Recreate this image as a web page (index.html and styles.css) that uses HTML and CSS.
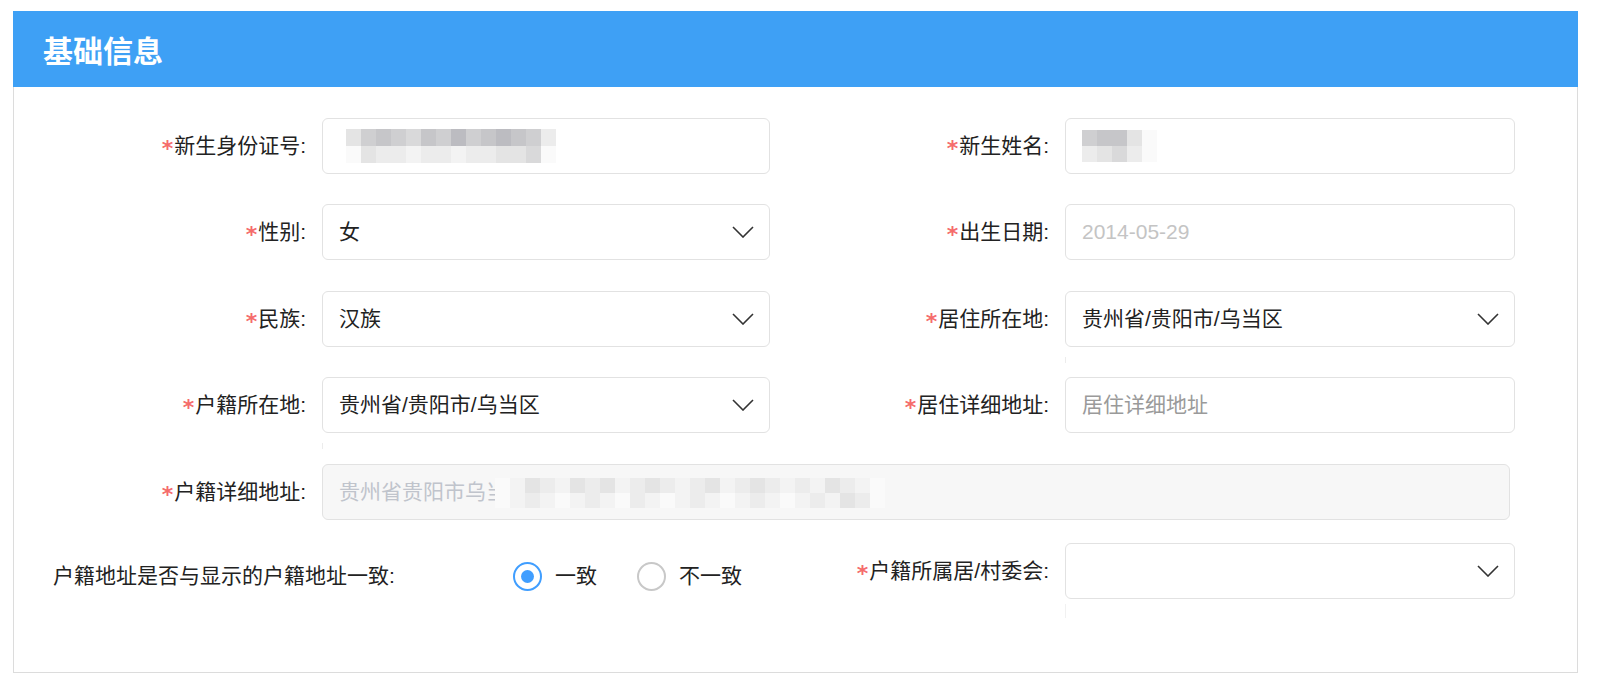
FILE: index.html
```html
<!DOCTYPE html>
<html lang="zh-CN">
<head>
<meta charset="utf-8">
<title>基础信息</title>
<link rel="stylesheet" href="styles.css">
</head>
<body>
<div class="panel">
  <div class="panel-head"><h2 class="panel-title">基础信息</h2></div>
  <div class="panel-body">
    <div class="row">
      <label class="label req">新生身份证号:</label>
      <div class="field">
        <div class="mz mz-id">
          <i class="e"></i><i class="c"></i><i class="b"></i><i class="c"></i><i class="d"></i><i class="b"></i><i class="c"></i><i class="a"></i><i class="c"></i><i class="b"></i><i class="a"></i><i class="b"></i><i class="c"></i><i class="f"></i>
          <i class="h"></i><i class="e"></i><i class="f"></i><i class="f"></i><i class="g"></i><i class="f"></i><i class="f"></i><i class="g"></i><i class="f"></i><i class="f"></i><i class="e"></i><i class="e"></i><i class="d"></i><i class="h"></i>
        </div>
      </div>
      <label class="label req">新生姓名:</label>
      <div class="field">
        <div class="mz mz-name">
          <i class="c"></i><i class="b"></i><i class="b"></i><i class="e"></i><i class="h"></i>
          <i class="f"></i><i class="e"></i><i class="d"></i><i class="f"></i><i class="h"></i>
        </div>
      </div>
    </div>

    <div class="row gap31">
      <label class="label req">性别:</label>
      <div class="field select"><span class="value">女</span><svg class="chev" width="22" height="12" viewBox="0 0 22 12"><polyline points="1,1 11,11 21,1"/></svg></div>
      <label class="label req">出生日期:</label>
      <div class="field"><span class="value muted">2014-05-29</span></div>
    </div>

    <div class="row">
      <label class="label req">民族:</label>
      <div class="field select"><span class="value">汉族</span><svg class="chev" width="22" height="12" viewBox="0 0 22 12"><polyline points="1,1 11,11 21,1"/></svg></div>
      <label class="label req">居住所在地:</label>
      <div class="field select"><span class="value">贵州省/贵阳市/乌当区</span><svg class="chev" width="22" height="12" viewBox="0 0 22 12"><polyline points="1,1 11,11 21,1"/></svg><span class="tick"></span></div>
    </div>

    <div class="row gap31">
      <label class="label req">户籍所在地:</label>
      <div class="field select"><span class="value">贵州省/贵阳市/乌当区</span><svg class="chev" width="22" height="12" viewBox="0 0 22 12"><polyline points="1,1 11,11 21,1"/></svg><span class="tick"></span></div>
      <label class="label req">居住详细地址:</label>
      <div class="field"><span class="value placeholder">居住详细地址</span></div>
    </div>

    <div class="row gap23">
      <label class="label req">户籍详细地址:</label>
      <div class="field wide disabled">
        <span class="value">贵州省贵阳市乌当</span>
        <div class="mz mz-addr">
          <i class="h"></i><i class="g"></i><i class="e"></i><i class="f"></i><i class="g"></i><i class="e"></i><i class="f"></i><i class="e"></i><i class="g"></i><i class="f"></i><i class="e"></i><i class="f"></i><i class="g"></i><i class="f"></i><i class="e"></i><i class="g"></i><i class="f"></i><i class="e"></i><i class="f"></i><i class="g"></i><i class="f"></i><i class="g"></i><i class="e"></i><i class="f"></i><i class="g"></i><i class="h"></i>
          <i class="h"></i><i class="g"></i><i class="f"></i><i class="g"></i><i class="h"></i><i class="g"></i><i class="f"></i><i class="g"></i><i class="h"></i><i class="f"></i><i class="g"></i><i class="h"></i><i class="g"></i><i class="f"></i><i class="g"></i><i class="h"></i><i class="g"></i><i class="f"></i><i class="g"></i><i class="h"></i><i class="g"></i><i class="f"></i><i class="g"></i><i class="e"></i><i class="f"></i><i class="h"></i>
        </div>
      </div>
    </div>

    <div class="row">
      <div class="consistent">
        <span class="plain-label">户籍地址是否与显示的户籍地址一致:</span>
        <div class="radios">
          <span class="radio"><span class="dot checked"></span>一致</span>
          <span class="radio"><span class="dot"></span>不一致</span>
        </div>
      </div>
      <label class="label req">户籍所属居/村委会:</label>
      <div class="field select"><span class="value"></span><svg class="chev" width="22" height="12" viewBox="0 0 22 12"><polyline points="1,1 11,11 21,1"/></svg><span class="tick long"></span></div>
    </div>
  </div>
</div>
</body>
</html>
```

FILE: styles.css
```css
* { box-sizing: border-box; }

body {
  margin: 0;
  background: #fff;
  font-family: "Liberation Sans", "Noto Sans CJK SC", sans-serif;
  color: #222;
}

.panel {
  margin: 11px 22px 0 13px;
}

.panel-head {
  height: 76px;
  background: #3ea0f5;
  display: flex;
  align-items: center;
  padding-left: 30px;
}

.panel-title {
  margin: 0;
  font-family: "Noto Sans CJK SC", sans-serif;
  font-size: 30px;
  font-weight: 700;
  line-height: 1;
  color: #fff;
}

.panel-body {
  border: 1px solid #dcdcdc;
  border-top: 0;
  padding: 31px 62px 73px 39px;
}

.row {
  display: grid;
  grid-template-columns: 269px 448px 295px 450px;
  align-items: center;
  margin-bottom: 30px;
}
.row.gap31 { margin-bottom: 31px; }
.row.gap23 { margin-bottom: 23px; }
.row:last-child { margin-bottom: 0; }

.label {
  text-align: right;
  padding-right: 16px;
  font-size: 21px;
  line-height: 28px;
  white-space: nowrap;
  color: #222;
}
.label.req::before {
  content: "*";
  display: inline-block;
  margin-right: 1px;
  font-family: "DejaVu Sans", sans-serif;
  font-size: 22px;
  font-weight: 700;
  color: #f56c6c;
  transform: translateY(3px);
}

.field {
  position: relative;
  height: 56px;
  border: 1px solid #e2e2e2;
  border-radius: 6px;
  background: #fff;
  display: flex;
  align-items: center;
  padding: 0 15px 0 16px;
  font-size: 21px;
  line-height: 28px;
}
.field.wide {
  grid-column: 2 / 5;
  margin-right: 5px;
}
.field.disabled {
  background: #f7f7f7;
  color: #c0c4cc;
}
.field.select {
  justify-content: space-between;
}

.value { white-space: nowrap; }
.value.muted { color: #c4c4c4; }
.value.placeholder { color: #9a9a9a; }

.chev {
  flex: none;
}
.chev polyline {
  fill: none;
  stroke: #333;
  stroke-width: 1.6;
}

.tick {
  position: absolute;
  left: -1px;
  top: calc(100% + 11px);
  width: 1px;
  height: 6px;
  background: #ececec;
}
.tick.long {
  top: calc(100% + 6px);
  height: 14px;
  background: #f1f1f1;
}

/* pixelated (blurred) values */
.mz {
  display: grid;
  flex: none;
}
.mz i { display: block; }
.mz-id {
  grid-template-columns: repeat(14, 15px);
  grid-auto-rows: 17px;
  margin-left: 7px;
}
.mz-name {
  grid-template-columns: repeat(5, 15px);
  grid-auto-rows: 16px;
  margin-left: 0;
}
.mz-addr {
  position: absolute;
  left: 172px;
  top: 13px;
  grid-template-columns: repeat(26, 15px);
  grid-auto-rows: 15px;
}
.mz .a { background: #bcbcc1; }
.mz .b { background: #c6c6c9; }
.mz .c { background: #cfcfd1; }
.mz .d { background: #d9d9da; }
.mz .e { background: #e4e4e4; }
.mz .f { background: #ececec; }
.mz .g { background: #f3f3f3; }
.mz .h { background: #fafafa; }

/* radio row */
.consistent {
  grid-column: 1 / 3;
  display: flex;
  align-items: center;
  margin-top: 10px;
}
.plain-label {
  width: 460px;
  font-size: 21px;
  line-height: 28px;
  white-space: nowrap;
  color: #222;
}
.radios {
  display: flex;
  align-items: center;
  gap: 40px;
}
.radio {
  display: inline-flex;
  align-items: center;
  gap: 13px;
  font-size: 21px;
  line-height: 28px;
  color: #222;
}
.dot {
  width: 29px;
  height: 29px;
  border: 2px solid #c8c8c8;
  border-radius: 50%;
  display: flex;
  align-items: center;
  justify-content: center;
}
.dot.checked {
  border-color: #409eff;
}
.dot.checked::after {
  content: "";
  width: 13px;
  height: 13px;
  border-radius: 50%;
  background: #409eff;
}
```
